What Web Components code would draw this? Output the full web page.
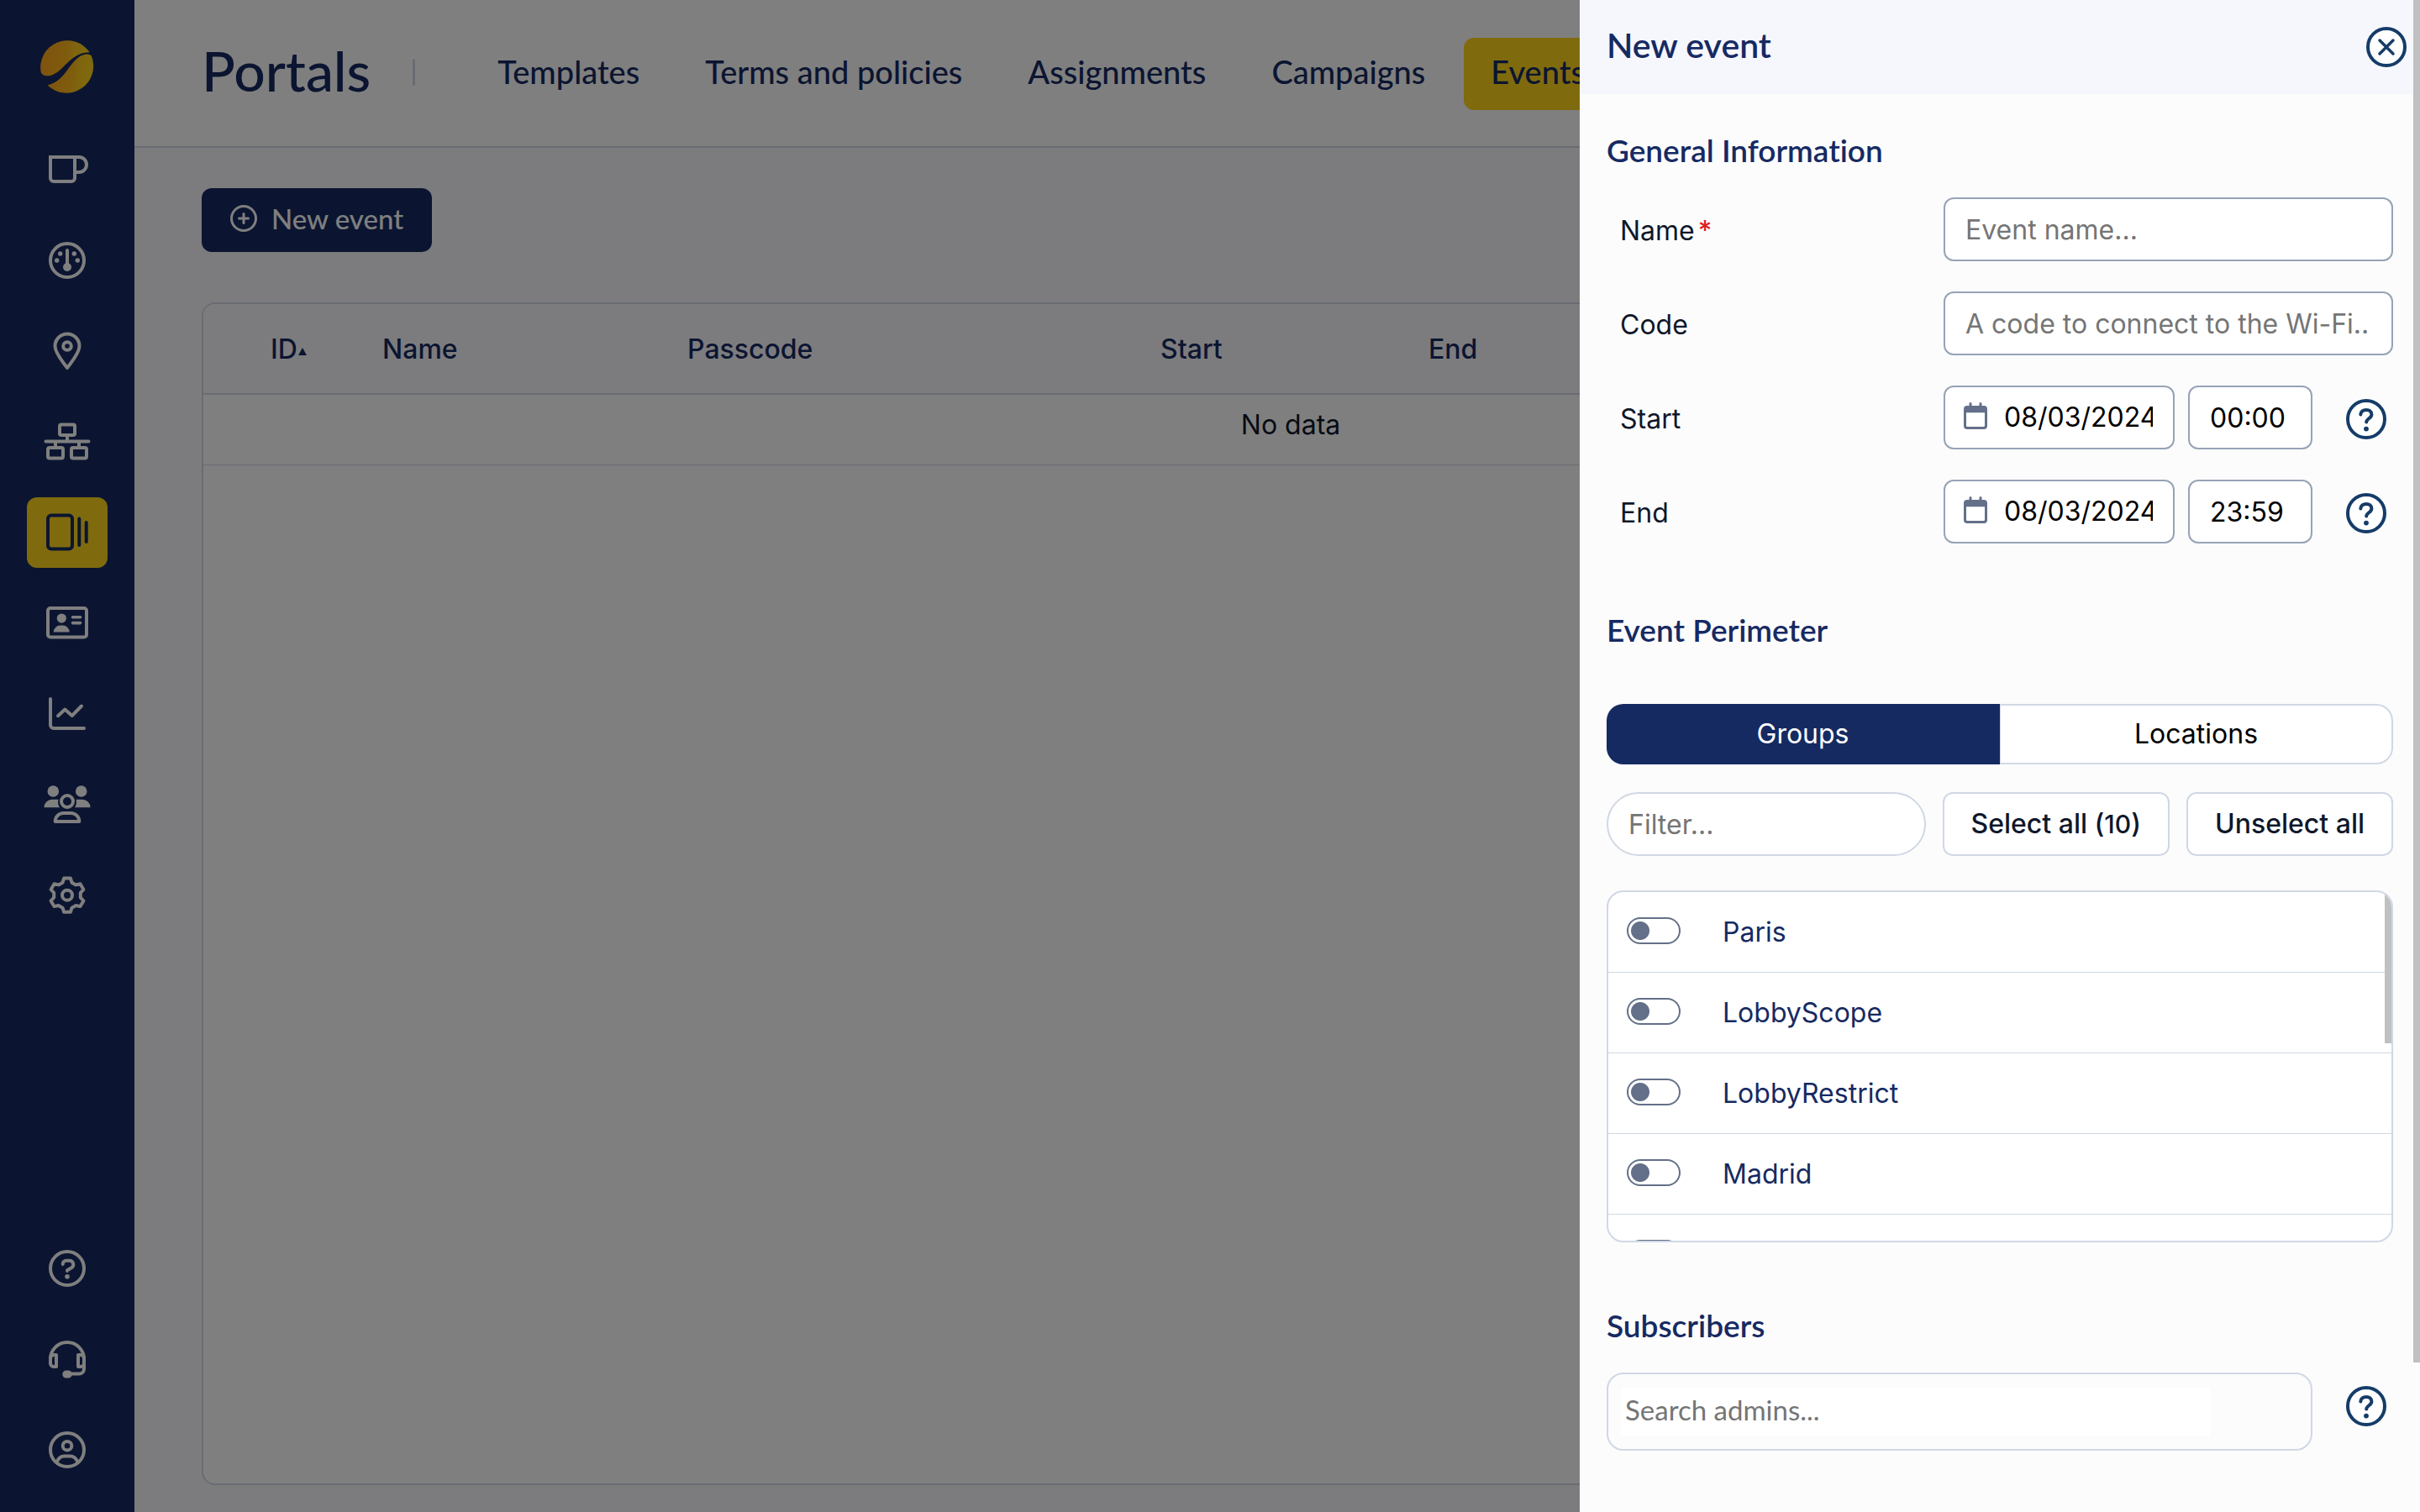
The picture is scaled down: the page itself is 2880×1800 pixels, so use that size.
<!DOCTYPE html>
<html lang="en">
<head>
<meta charset="utf-8">
<title>Portals – Events</title>
<style>
  :root {
    --navy: #162a62;
    --yellow: #ffd51c;
    --line: #d0d8e4;
    --field-line: #97a3b6;
    --slate: #647089;
    --help: #153c68;
    --display: Lato, "Liberation Sans", sans-serif;
    --body: Inter, "Liberation Sans", sans-serif;
  }
  body { margin: 0; font: 400 32px/48px var(--body); color: #0f172a; }
</style>
</head>
<body>
<portal-app></portal-app>

<script>
const S = 'fill="none" stroke="currentColor" stroke-width="4" stroke-linecap="round" stroke-linejoin="round"';
const ICONS = {
  logo: ['0 0 64 64', `<defs><linearGradient id="g" x1="0" y1=".4" x2="1" y2=".5"><stop offset="0" stop-color="#ffa51c"/><stop offset=".55" stop-color="#ffb91c"/><stop offset=".7" stop-color="#ffcb1c"/><stop offset="1" stop-color="#ffd51c"/></linearGradient></defs>
    <path fill="url(#g)" d="M58.7 14.3A32 32 0 0 0 .8 38.5C3 42 7 43 12 42 28 38 35 14.5 58.7 14.3Z"/>
    <path fill="url(#g)" d="M60.6 18A32 32 0 0 1 8.7 53.4C32 48.500 35 20 54 16.600Q58 16 60.600 18Z"/>`],
  mug: ['0 0 56 48', `<g ${S}><path d="M8 9H37V34a4 4 0 0 1-4 4H12a4 4 0 0 1-4-4Z" stroke-linejoin="miter"/><path d="M37 9H42a9 9 0 0 1 0 18H37"/></g>`],
  gauge: ['0 0 56 48', `<g ${S}><circle cx="28" cy="24" r="20"/><path d="M28 12V30"/></g><g fill="currentColor"><circle cx="28" cy="32" r="5"/><circle cx="15.700" cy="24" r="2.700"/><circle cx="19.700" cy="16" r="2.700"/><circle cx="36.300" cy="16" r="2.700"/><circle cx="40.300" cy="24" r="2.700"/></g>`],
  pin: ['0 0 56 48', `<g ${S}><path d="M28 44C24 38 13.500 27 13.500 18a14.500 14.500 0 0 1 29 0C42.500 27 32 38 28 44Z"/><circle cx="28" cy="18" r="4.800"/></g>`],
  network: ['0 0 56 48', `<g ${S}><rect x="19" y="3.500" width="18" height="12.500" rx="2"/><path d="M2.500 23.500H53.500M28 16V23M14 24V31M42 24V31"/><rect x="5" y="31" width="18" height="12.500" rx="2"/><rect x="33" y="31" width="18" height="12.500" rx="2"/></g>`],
  portals: ['0 0 56 48', `<g ${S}><rect x="5" y="3.500" width="29" height="40" rx="4"/><path d="M42.300 7.500V39M50.700 12V35"/></g>`],
  card: ['0 0 56 48', `<g ${S}><rect x="5" y="6" width="46" height="34.500" rx="3"/><path stroke-width="3.600" d="M34.500 16.700H43.500M34.500 23.600H43.500"/></g><g fill="currentColor"><circle cx="21.300" cy="18" r="5.600"/><path d="M11.700 34.600a8 8 0 0 1 8-8h3a8 8 0 0 1 8 8z"/></g>`],
  chart: ['0 0 56 48', `<g ${S}><path d="M8 6V37a4 4 0 0 0 4 4H48"/><path d="M17 26.200 25.300 18.500 33.700 26 45 14.500"/></g>`],
  users: ['0 0 56 48', `<g fill="currentColor"><circle cx="11.300" cy="8" r="6.800"/><circle cx="44.700" cy="8" r="6.800"/><path d="M.5 27.200a9.400 9.400 0 0 1 9.400-9.400H17.500q-1.500 5 1.500 9.400ZM55.500 27.200a9.400 9.400 0 0 0-9.400-9.400H38.500q1.500 5-1.500 9.400Z"/></g><g ${S}><circle cx="28" cy="20" r="7"/><path d="M13.700 44c0-5.500 4.300-10 10-10h8.600c5.700 0 10 4.500 10 10Z"/></g>`],
  gear: ['0 0 56 48', `<g ${S}><path d="M24.100 3.600H31.900L33.500 8.700 38.300 11.400 43.500 10.300 47.400 17 43.800 20.900V26.500L47.400 30.400 43.500 37.100 38.300 36 33.500 38.700 31.900 43.800H24.100L22.500 38.700 17.700 36 12.500 37.100 8.600 30.400 12.200 26.500V20.900L8.600 17 12.500 10.300 17.700 11.400 22.500 8.700Z"/><circle cx="28" cy="23.700" r="6"/></g>`],
  help: ['0 0 56 48', `<g ${S}><circle cx="28" cy="24" r="20"/><path d="M22.700 19v-.200a4 4 0 0 1 4-4h4a4.600 4.600 0 0 1 2.400 8.500L28 26.300V27"/></g><circle cx="28" cy="33.800" r="2.800" fill="currentColor"/>`],
  headset: ['0 0 56 48', `<g ${S}><path d="M8 29V24a20 20 0 0 1 40 0V35.500a6 6 0 0 1-6 6H30"/><path d="M8 23a4 4 0 0 1 4-4h3V33h-3a4 4 0 0 1-4-4ZM48 23a4 4 0 0 0-4-4h-3V33h3a4 4 0 0 0 4-4Z"/></g><rect x="22.300" y="37.500" width="11.400" height="9" rx="4.500" fill="currentColor"/>`],
  profile: ['0 0 56 48', `<g ${S}><circle cx="28" cy="24" r="20"/><circle cx="28" cy="19.200" r="5.300"/><path d="M15.500 38.500c2-4.500 5-7 9-7h7c4 0 7 2.500 9 7"/></g>`],
  plus: ['0 0 32 32', `<g fill="none" stroke="currentColor" stroke-width="3" stroke-linecap="round"><circle cx="16" cy="16" r="14.500"/><path d="M10.500 16H21.500M16 10.500V21.500"/></g>`],
  question: ['0 0 48 48', `<g ${S}><circle cx="24" cy="24" r="22" fill="#fff"/><path d="M17.300 18.500c.3-3.500 3-5.500 6.700-5.500 3.700 0 6.400 2 6.400 5.400 0 4.600-6.200 5-6.200 9.100"/></g><circle cx="24" cy="35.600" r="2.900" fill="currentColor"/>`],
  close: ['0 0 48 48', `<g ${S}><circle cx="24" cy="24" r="22" fill="#fff"/><path stroke-width="3.500" d="M16 16 32 32M32 16 16 32"/></g>`],
  calendar: ['0 0 28 32', `<g fill="currentColor"><rect x="6.500" y="0" width="3" height="8" rx="1.500"/><rect x="18.500" y="0" width="3" height="8" rx="1.500"/><path fill-rule="evenodd" d="M4 4H24a4 4 0 0 1 4 4V28a4 4 0 0 1-4 4H4a4 4 0 0 1-4-4V8A4 4 0 0 1 4 4ZM3 12.300V27.500a1.500 1.500 0 0 0 1.500 1.500H23.500a1.500 1.500 0 0 0 1.500-1.500V12.300Z"/></g>`]
};

class Base extends HTMLElement {
  connectedCallback() {
    if (this.shadowRoot) return;
    const t = document.createElement('template');
    t.innerHTML = '<style>*{box-sizing:border-box}button,input{font:inherit;color:inherit;margin:0}</style>' + this.render();
    this.attachShadow({ mode: 'open' }).append(t.content.cloneNode(true));
  }
}

customElements.define('ui-icon', class extends Base {
  render() {
    const [box, art] = ICONS[this.getAttribute('name')];
    const [, , w, h] = box.split(' ');
    return `<style>:host{display:inline-flex;flex:none}svg{display:block}</style>
      <svg width="${w}" height="${h}" viewBox="${box}" aria-hidden="true">${art}</svg>`;
  }
});

customElements.define('side-nav', class extends Base {
  render() {
    const link = ([icon, label]) => `<a href="#${icon}" aria-label="${label}"${icon === 'portals' ? ' aria-current="page"' : ''}><ui-icon name="${icon}"></ui-icon></a>`;
    const top = [['mug', 'Welcome'], ['gauge', 'Dashboard'], ['pin', 'Locations'], ['network', 'Network'], ['portals', 'Portals'], ['card', 'Users'], ['chart', 'Analytics'], ['users', 'Administrators'], ['gear', 'Settings']];
    const bottom = [['help', 'Help'], ['headset', 'Support'], ['profile', 'Account']];
    return `<style>
      :host{display:flex;flex-direction:column;align-items:center;background:var(--navy);color:#fff;padding:48px 0 32px}
      nav{display:flex;flex-direction:column;gap:24px}
      .top{margin-top:48px}
      .bottom{margin-top:auto}
      a{display:flex;align-items:center;justify-content:center;width:96px;height:84px;border-radius:12px;color:inherit}
      a[aria-current]{background:var(--yellow);color:var(--navy)}
    </style>
    <ui-icon name="logo"></ui-icon>
    <nav class="top" aria-label="Main">${top.map(link).join('')}</nav>
    <nav class="bottom" aria-label="Help">${bottom.map(link).join('')}</nav>`;
  }
});

customElements.define('page-header', class extends Base {
  render() {
    return `<style>
      :host{display:flex;align-items:center;height:176px;padding:2px 48px 0 80px;background:#fff;border-bottom:2px solid var(--line);color:var(--navy);font-family:var(--display);font-weight:500}
      h1{margin:0;padding-bottom:8px;font-size:66px;line-height:80px;font-weight:500}
      i{width:3px;height:32px;border-radius:2px;background:var(--line);margin:0 66px 4px 50px}
      nav{display:flex;gap:14px}
      a{height:86px;padding:0 32px 6px;border-radius:12px;font-size:38px;line-height:80px;color:inherit;text-decoration:none;white-space:nowrap}
      a[aria-current]{background:var(--yellow)}
    </style>
    <h1>Portals</h1><i></i>
    <nav aria-label="Portals">
      <a href="#templates">Templates</a><a href="#terms">Terms and policies</a><a href="#assignments">Assignments</a><a href="#campaigns">Campaigns</a><a href="#events" aria-current="page">Events</a>
    </nav>`;
  }
});

customElements.define('event-table', class extends Base {
  render() {
    return `<style>
      :host{display:block;border:2px solid var(--line);border-radius:16px;background:#fff;overflow:hidden}
      table{width:100%;table-layout:fixed;border-collapse:separate;border-spacing:0}
      thead{background:#f9f9fc}
      th{height:108px;padding:2px 0 0 16px;text-align:left;font-weight:500;color:var(--navy);border-bottom:2px solid var(--line)}
      svg{margin-left:1px;vertical-align:4px}
      td{padding:12px 0 23px;text-align:center;border-bottom:1px solid var(--line)}
      .pad{width:64px}.id{width:133px}.name{width:363px}.code{width:563px}.start{width:319px}
    </style>
    <table>
      <thead><tr><th class="pad"></th><th class="id">ID<svg width="10" height="9" viewBox="0 0 10 9" aria-hidden="true"><path d="M5 0 10 9H0Z" fill="currentColor"/></svg></th><th class="name">Name</th><th class="code">Passcode</th><th class="start">Start</th><th>End</th></tr></thead>
      <tbody><tr><td colspan="6">No data</td></tr></tbody>
    </table>`;
  }
});

customElements.define('help-button', class extends Base {
  render() {
    return `<style>
      :host{display:flex}
      button{display:flex;padding:0;border:0;background:none;color:var(--help)}
    </style><button type="button" aria-label="Help"><ui-icon name="question"></ui-icon></button>`;
  }
});

customElements.define('form-row', class extends Base {
  render() {
    const a = n => this.getAttribute(n);
    const body = a('kind') === 'moment'
      ? `<span class="box date"><ui-icon name="calendar"></ui-icon><input id="f" value="${a('date')}"></span>
         <input class="box time" aria-label="${a('label')} time" value="${a('time')}">
         <help-button></help-button>`
      : `<input id="f" class="box text" placeholder="${a('placeholder')}"${this.hasAttribute('required') ? ' required' : ''}>`;
    return `<style>
      :host{display:grid;grid-template-columns:385px minmax(0,1fr);height:80px;padding-left:16px}
      label{line-height:80px}
      b{color:#e11d1d;font-weight:500;margin-left:4px}
      .controls{display:flex;gap:16px}
      .box{height:76px;border:2px solid var(--field-line);border-radius:12px;background:#fff;color:#000}
      input{min-width:0;outline:0}
      input::placeholder{color:#757575;opacity:1}
      .text{flex:1;padding:0 26px 0 24px}
      .date{display:flex;align-items:center;gap:20px;width:275px;padding:0 24px 0 22px}
      .date ui-icon{color:var(--slate);margin-bottom:4px}
      .date input{flex:1;width:0;padding:0;border:0;background:none}
      .time{width:148px;padding:0 24px}
      help-button{margin:0 8px 0 auto;align-self:center}
    </style>
    <label for="f">${a('label')}${this.hasAttribute('required') ? '<b>*</b>' : ''}</label>
    <div class="controls">${body}</div>`;
  }
});

customElements.define('toggle-row', class extends Base {
  render() {
    return `<style>
      :host{display:block;border-bottom:1px solid var(--line)}
      label{display:flex;align-items:center;height:95px;padding-left:22px;color:var(--navy)}
      input{appearance:none;width:64px;height:32px;margin:0 50px 4px 0;border:2px solid var(--slate);border-radius:16px;background:radial-gradient(circle at 14px 50%,var(--slate) 10.5px,transparent 11.5px)}
    </style>
    <label><input type="checkbox"><slot></slot></label>`;
  }
});

customElements.define('group-picker', class extends Base {
  render() {
    return `<style>
      :host{display:flex;flex-direction:column}
      .tabs{display:grid;grid-template-columns:1fr 1fr;height:72px}
      .tabs button{border:2px solid var(--line);border-left-width:1px;border-radius:0 20px 20px 0;background:#fff;color:#000}
      .tabs button[aria-selected=true]{background:var(--navy);border-color:var(--navy);border-radius:20px 0 0 20px;color:#fff}
      .tools{display:flex;gap:20px;margin-top:33px}
      .tools>*{height:76px;border:2px solid var(--line);background:#fff}
      .tools button{padding:0 32px;border-radius:12px;font-weight:500;white-space:nowrap}
      .tools input{flex:1;min-width:0;padding:0 24px;border-radius:38px}
      input::placeholder{color:#757575;opacity:1}
      small{font-size:30px}
      .list{position:relative;height:419px;margin-top:41px;border:2px solid var(--line);border-radius:20px;background:#fff;overflow:hidden}
      .bar{position:absolute;top:0;right:0;width:8px;height:180px;background:#c0c0c0}
    </style>
    <div class="tabs" role="tablist"><button type="button" role="tab" aria-selected="true">Groups</button><button type="button" role="tab" aria-selected="false">Locations</button></div>
    <div class="tools"><input placeholder="Filter..." aria-label="Filter"><button type="button">Select all (<small>10</small>)</button><button type="button">Unselect all</button></div>
    <div class="list"><toggle-row>Paris</toggle-row><toggle-row>LobbyScope</toggle-row><toggle-row>LobbyRestrict</toggle-row><toggle-row>Madrid</toggle-row><toggle-row></toggle-row><div class="bar"></div></div>`;
  }
});

customElements.define('admin-search', class extends Base {
  render() {
    return `<style>
      :host{display:flex;gap:40px;padding-right:8px}
      .box{flex:1;padding:16px;border:2px solid var(--line);border-radius:20px}
      input{display:block;width:700px;height:57px;padding:0 0 6px 4px;border:0;background:#fff;font:400 33px/48px var(--display)}
      input::placeholder{color:#757575;opacity:1}
      help-button{height:80px;align-items:center}
    </style>
    <div class="box"><input placeholder="Search admins..." aria-label="Search admins"></div><help-button></help-button>`;
  }
});

customElements.define('event-drawer', class extends Base {
  render() {
    return `<style>
      :host{display:block;background:#fcfcfc;overflow:hidden}
      header{display:flex;align-items:center;justify-content:space-between;height:112px;padding:0 16px 0 32px;background:#f6f7fd}
      h2,h3{margin:0;font-family:var(--display);font-weight:600;line-height:48px;color:var(--navy);font-variant-ligatures:none}
      h2{font-size:41px;padding-bottom:4px}
      h3{font-size:37px;margin-bottom:32px}
      header button{display:flex;padding:0;border:0;background:none;color:var(--help)}
      form{display:flex;flex-direction:column;gap:75px;padding:43px 32px 0}
      .rows{display:flex;flex-direction:column;gap:32px}
      group-picker{margin-top:64px}
      .bar{position:absolute;top:0;right:0;width:8px;height:90.1%;background:#c0c0c0}
    </style>
    <header><h2>New event</h2><button type="button" aria-label="Close"><ui-icon name="close"></ui-icon></button></header>
    <form>
      <section><h3>General Information</h3>
        <div class="rows">
          <form-row label="Name" placeholder="Event name..." required></form-row>
          <form-row label="Code" placeholder="A code to connect to the Wi-Fi..."></form-row>
          <form-row kind="moment" label="Start" date="08/03/2024" time="00:00"></form-row>
          <form-row kind="moment" label="End" date="08/03/2024" time="23:59"></form-row>
        </div>
      </section>
      <section><h3>Event Perimeter</h3><group-picker></group-picker></section>
      <section><h3>Subscribers</h3><admin-search></admin-search></section>
    </form>
    <div class="bar"></div>`;
  }
});

customElements.define('portal-app', class extends Base {
  render() {
    return `<style>
      :host{display:grid;grid-template-columns:160px 1fr;height:100vh;overflow:hidden;background:#f9f9fc}
      .page{display:flex;flex-direction:column;min-width:0}
      main{flex:1;display:flex;flex-direction:column;align-items:flex-start;gap:60px;padding:48px 48px 32px 80px}
      .new{display:flex;align-items:center;gap:17px;height:76px;padding:0 34px 4px;border:0;border-radius:12px;background:var(--navy);color:#fff;font-family:var(--display);font-weight:500;font-size:33px}
      event-table{flex:1;width:100%}
      .shade{position:fixed;inset:0;background:rgba(0,0,0,.5)}
      event-drawer{position:fixed;inset:0 0 0 auto;width:1000px;max-width:100vw}
    </style>
    <side-nav></side-nav>
    <div class="page"><page-header></page-header>
      <main><button class="new" type="button"><ui-icon name="plus"></ui-icon>New event</button><event-table></event-table></main>
    </div>
    <div class="shade"></div>
    <event-drawer role="dialog" aria-label="New event"></event-drawer>`;
  }
});
</script>
</body>
</html>
